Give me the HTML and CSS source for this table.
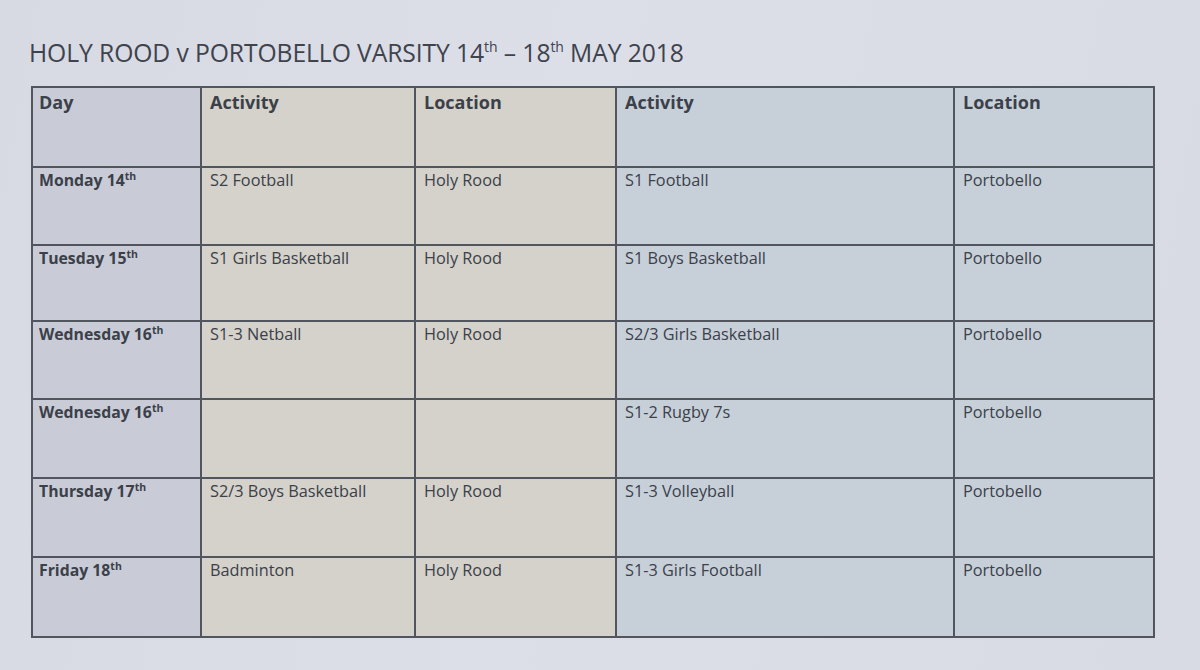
FILE: index.html
```html
<!DOCTYPE html>
<html lang="en">
<head>
<meta charset="utf-8">
<title>Holy Rood v Portobello Varsity</title>
<link rel="stylesheet" href="styles.css">
</head>
<body>
<div class="sheet">
  <h1 class="title">HOLY ROOD v PORTOBELLO VARSITY 14<sup>th</sup> – 18<sup>th</sup> MAY 2018</h1>
  <table class="schedule">
    <colgroup>
      <col class="c-day">
      <col class="c-act1">
      <col class="c-loc1">
      <col class="c-act2">
      <col class="c-loc2">
    </colgroup>
    <thead>
      <tr class="r-head">
        <th class="day">Day</th>
        <th class="hr">Activity</th>
        <th class="hr">Location</th>
        <th class="pb">Activity</th>
        <th class="pb">Location</th>
      </tr>
    </thead>
    <tbody>
      <tr class="r1">
        <td class="day">Monday 14<sup>th</sup></td>
        <td class="hr">S2 Football</td>
        <td class="hr">Holy Rood</td>
        <td class="pb">S1 Football</td>
        <td class="pb">Portobello</td>
      </tr>
      <tr class="r2">
        <td class="day">Tuesday 15<sup>th</sup></td>
        <td class="hr">S1 Girls Basketball</td>
        <td class="hr">Holy Rood</td>
        <td class="pb">S1 Boys Basketball</td>
        <td class="pb">Portobello</td>
      </tr>
      <tr class="r3">
        <td class="day">Wednesday 16<sup>th</sup></td>
        <td class="hr">S1-3 Netball</td>
        <td class="hr">Holy Rood</td>
        <td class="pb">S2/3 Girls Basketball</td>
        <td class="pb">Portobello</td>
      </tr>
      <tr class="r4">
        <td class="day">Wednesday 16<sup>th</sup></td>
        <td class="hr"></td>
        <td class="hr"></td>
        <td class="pb">S1-2 Rugby 7s</td>
        <td class="pb">Portobello</td>
      </tr>
      <tr class="r5">
        <td class="day">Thursday 17<sup>th</sup></td>
        <td class="hr">S2/3 Boys Basketball</td>
        <td class="hr">Holy Rood</td>
        <td class="pb">S1-3 Volleyball</td>
        <td class="pb">Portobello</td>
      </tr>
      <tr class="r6">
        <td class="day">Friday 18<sup>th</sup></td>
        <td class="hr">Badminton</td>
        <td class="hr">Holy Rood</td>
        <td class="pb">S1-3 Girls Football</td>
        <td class="pb">Portobello</td>
      </tr>
    </tbody>
  </table>
</div>
</body>
</html>
```

FILE: styles.css
```css
html, body {
  margin: 0;
  padding: 0;
}
body {
  width: 1200px;
  height: 670px;
  overflow: hidden;
  background: linear-gradient(100deg, #d7d9e3 0%, #dcdee8 45%, #d8dbe4 100%);
  font-family: "Open Sans", "Liberation Sans", sans-serif;
  color: #3b4049;
}
.sheet {
  padding: 38px 0 0 29px;
}
.title {
  margin: 0 0 18px 0;
  font-size: 24.7px;
  font-weight: 400;
  line-height: 30px;
  letter-spacing: -0.1px;
  color: #3e434c;
}
.title sup {
  font-size: 14px;
  vertical-align: 10px;
  line-height: 0;
}
.schedule {
  border-collapse: collapse;
  table-layout: fixed;
  width: 1122px;
  margin-left: 2px;
}
.c-day { width: 169px; }
.c-act1 { width: 214px; }
.c-loc1 { width: 201px; }
.c-act2 { width: 338px; }
.c-loc2 { width: 200px; }

.schedule th,
.schedule td {
  border: 2px solid #50555e;
  vertical-align: top;
  text-align: left;
  padding: 2px 8px 0 8px;
  line-height: 20px;
  font-size: 16.3px;
  font-weight: 400;
}
.schedule th {
  font-size: 18px;
  font-weight: 700;
  line-height: 24px;
  padding-top: 2px;
}
.schedule .day {
  padding-left: 6px;
}
.schedule td.day {
  font-weight: 700;
  font-size: 15.8px;
}
.schedule sup {
  font-size: 10.5px;
  line-height: 0;
  vertical-align: 6px;
}
.day { background: #c9ccd7; }
.hr { background: #d4d2ca; }
.pb { background: #c7d0d9; }

.r-head { height: 80px; }
.r1 { height: 78px; }
.r2 { height: 76px; }
.r3 { height: 78px; }
.r4 { height: 79px; }
.r5 { height: 79px; }
.r6 { height: 80px; }
```
